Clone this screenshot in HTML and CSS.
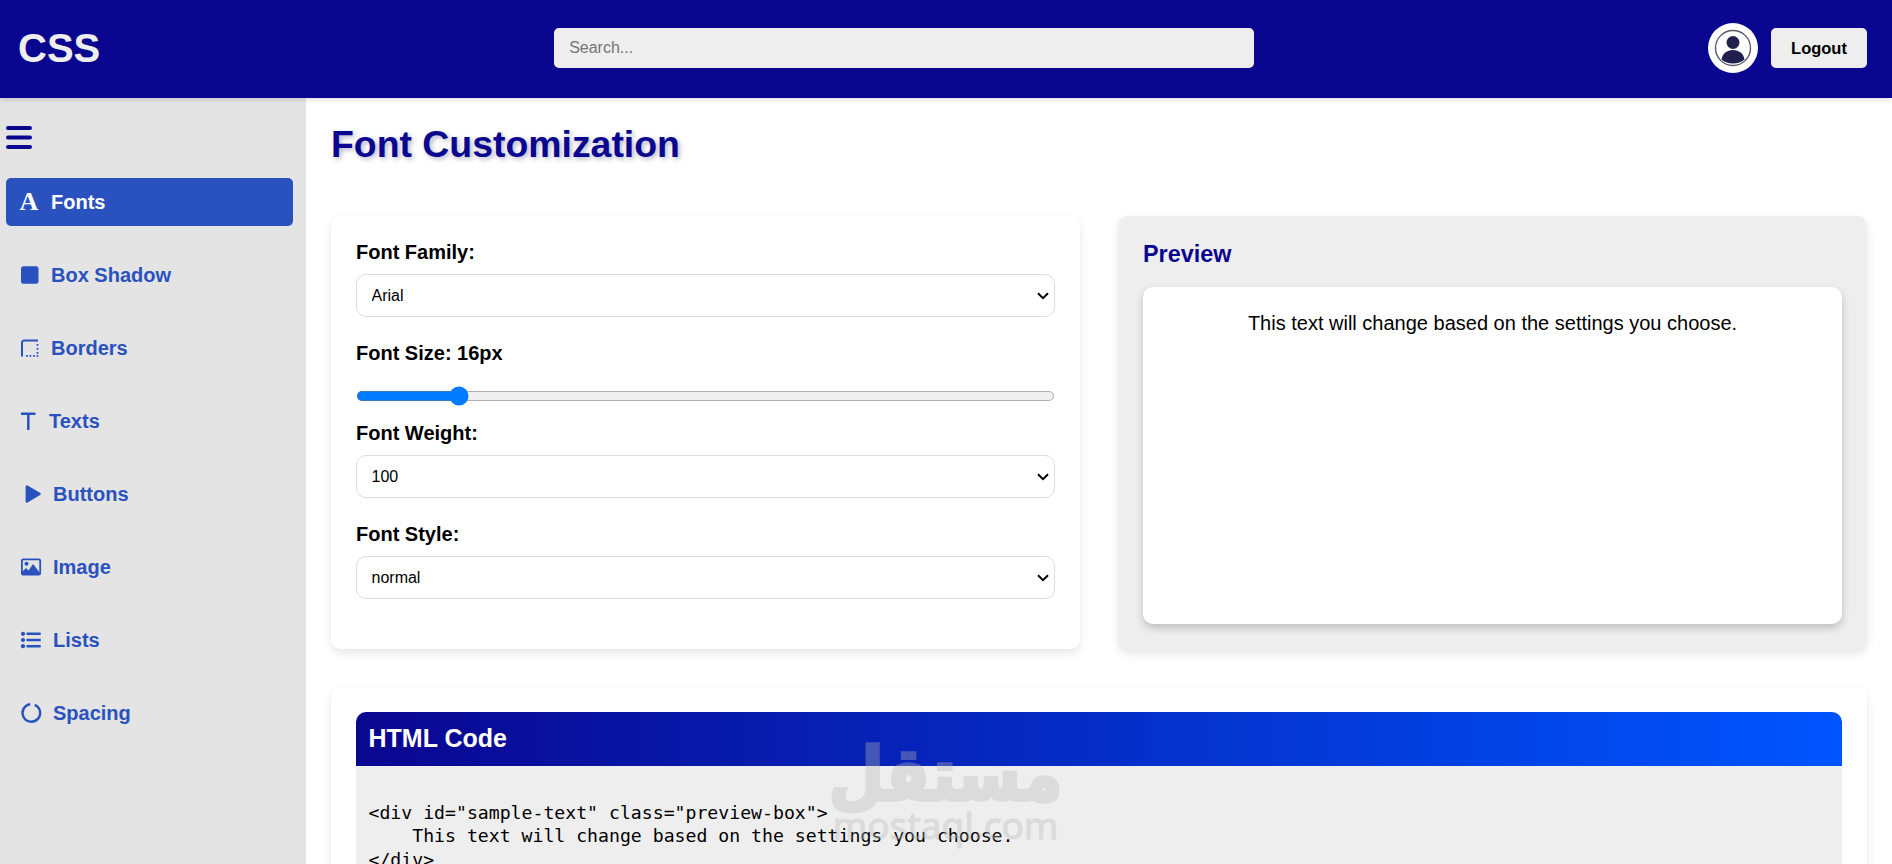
FILE: index.html
```html
<!DOCTYPE html>
<html lang="en">
<head>
<meta charset="utf-8">
<title>CSS</title>
<link rel="stylesheet" href="styles.css">
</head>
<body>
<header class="topbar">
  <div class="logo">CSS</div>
  <input class="search" type="text" placeholder="Search...">
  <div class="account">
    <div class="avatar">
      <svg width="38" height="38" viewBox="0 0 38 38"><circle cx="19" cy="19" r="17.500" fill="#fff" stroke="#5a5a6a" stroke-width="1.400"/><circle cx="19" cy="13.500" r="6.500" fill="#20204f"/><path d="M7.500 30.500c1-6 5.500-9.500 11.500-9.500s10.500 3.500 11.500 9.500c-3 2.700-7 4-11.500 4s-8.500-1.300-11.500-4z" fill="#20204f"/></svg>
    </div>
    <button class="logout">Logout</button>
  </div>
</header>
<div class="layout">
  <aside class="sidebar">
    <svg class="burger" width="26" height="23" viewBox="0 0 26 23"><path d="M2 2h22M2 11.500h22M2 21h22" stroke="#0a068f" stroke-width="4" stroke-linecap="round"/></svg>
    <nav class="nav">
      <a class="nav-item active"><span class="glyph-a">A</span>Fonts</a>
      <a class="nav-item"><svg width="18" height="18" viewBox="0 0 18 18"><rect x="1" y="0.300" width="17.500" height="17.500" rx="2.500" fill="#2a52be"/></svg>Box Shadow</a>
      <a class="nav-item"><svg width="18" height="18" viewBox="0 0 18 18"><path d="M2 17.500V3.500A2 2 0 0 1 4 1.500h14" fill="none" stroke="#2a52be" stroke-width="2"/><path d="M17.500 5v1.800M17.500 9v1.800M17.500 13v1.800M6 16.800h1.800M9.500 16.800h1.800M13 16.800h1.800M16.500 16.800h1.800" stroke="#2a52be" stroke-width="1.800"/></svg>Borders</a>
      <a class="nav-item"><svg width="16" height="18" viewBox="0 0 16 18"><path d="M1 1.800h14.500M8.300 1.800v16.200" fill="none" stroke="#2a52be" stroke-width="2.500"/></svg>Texts</a>
      <a class="nav-item"><svg width="20" height="18" viewBox="0 0 20 18"><path d="M7.600.600l12.400 7.200a1.300 1.300 0 0 1 0 2.300l-12.400 7.400a1.300 1.300 0 0 1-2-1.100V1.700a1.300 1.300 0 0 1 2-1.100z" fill="#2a52be"/></svg>Buttons</a>
      <a class="nav-item"><svg width="20" height="18" viewBox="0 0 20 18"><rect x="1.900" y="1.300" width="18.300" height="15.400" rx="1.500" fill="none" stroke="#2a52be" stroke-width="1.800"/><circle cx="6.500" cy="5.800" r="2" fill="#2a52be"/><path d="M2 17v-3l4-4 2.500 2.500 4.500-6.500 7 9v2z" fill="#2a52be"/></svg>Image</a>
      <a class="nav-item"><svg width="20" height="18" viewBox="0 0 20 18"><path d="M6.500 2.800h14.200M6.500 9h14.200M6.500 15.200h14.200" stroke="#2a52be" stroke-width="2.500"/><circle cx="3" cy="2.800" r="2.100" fill="#2a52be"/><circle cx="3" cy="9" r="2.100" fill="#2a52be"/><circle cx="3" cy="15.200" r="2.100" fill="#2a52be"/></svg>Lists</a>
      <a class="nav-item"><svg width="20" height="20" viewBox="0 0 20 20"><path d="M13.700 1.800A8.800 8.800 0 1 1 9.200 1.200" fill="none" stroke="#2a52be" stroke-width="2.400" transform="translate(1 0)"/></svg>Spacing</a>
    </nav>
  </aside>
  <main class="main">
    <h1 class="title">Font Customization</h1>
    <div class="panels">
      <form class="card controls">
        <label class="field-label">Font Family:</label>
        <select class="field"><option>Arial</option></select>
        <label class="field-label">Font Size: 16px</label>
        <input class="slider" type="range" min="10" max="54" value="16">
        <label class="field-label">Font Weight:</label>
        <select class="field"><option>100</option></select>
        <label class="field-label">Font Style:</label>
        <select class="field"><option>normal</option></select>
      </form>
      <section class="card preview">
        <h3 class="preview-title">Preview</h3>
        <div class="preview-box">This text will change based on the settings you choose.</div>
      </section>
    </div>
    <section class="card code-card">
      <h3 class="code-head">HTML Code</h3>
      <pre class="code-body">&lt;div id="sample-text" class="preview-box"&gt;
    This text will change based on the settings you choose.
&lt;/div&gt;</pre>
    </section>
  </main>
</div>
<div class="watermark"><div class="wm-ar" dir="rtl" lang="ar">مستقل</div><div class="wm-en">mostaql.com</div></div>
</body>
</html>
```
FILE: styles.css
```css
* { box-sizing: border-box; }
html, body { margin: 0; height: 100%; overflow: hidden; }
body { font-family: "Liberation Sans", Arial, sans-serif; font-size: 20px; color: #000; background: #fff; position: relative; }

.topbar { height: 98px; background: #0a068f; display: flex; align-items: center; justify-content: space-between; padding: 0 25px 2px 18px; box-shadow: 0 2px 5px rgba(0,0,0,.12); position: relative; z-index: 2; }
.logo { font-size: 40px; font-weight: 700; color: #eee; }
.search { width: 700px; height: 40px; border: 0; border-radius: 5px; background: #eee; padding: 0 15px; font: 16px "Liberation Sans", Arial, sans-serif; }
.search::placeholder { color: #757575; }
.account { display: flex; align-items: center; gap: 13px; }
.avatar { width: 50px; height: 50px; border-radius: 50%; background: #fff; display: flex; align-items: center; justify-content: center; }
.logout { width: 96px; height: 40px; border: 0; border-radius: 5px; background: #eee; color: #000; font: 700 16.500px "Liberation Sans", Arial, sans-serif; padding: 0; }

.layout { display: flex; height: calc(100vh - 98px); }
.sidebar { width: 306px; flex: none; background: #e4e4e4; padding: 28px 13px 0 6px; }
.burger { display: block; margin-bottom: 29px; }
.nav { display: flex; flex-direction: column; gap: 25px; }
.nav-item { height: 48px; display: flex; align-items: center; gap: 13px; padding-left: 14px; border-radius: 5px; font-weight: 700; color: #2a52be; }
.nav-item svg { overflow: visible; flex: none; }
.nav-item.active { background: #2a52be; color: #fff; }
.glyph-a { width: 18px; display: flex; justify-content: center; font: 700 26px "Liberation Serif", serif; }

.main { flex: 1; min-width: 0; padding: 25px; }
.title { margin: 0 0 50px; font-size: 37.400px; line-height: 43px; font-weight: 700; color: #0a068f; text-shadow: 2px 2px 5px rgba(0,0,80,.3); }
.panels { display: grid; grid-template-columns: 749px 749px; gap: 38px; }
.card { border-radius: 10px; box-shadow: 0 4px 10px rgba(0,0,0,.1); background: #fff; padding: 25px; }
.controls { display: flex; flex-direction: column; height: 433px; }
.field-label { font-weight: 700; line-height: 23px; margin-bottom: 10px; }
.field { appearance: none; height: 43px; border: 1.500px solid #ddd; border-radius: 10px; background: #fff url("data:image/svg+xml,%3Csvg xmlns='http://www.w3.org/2000/svg' width='12' height='8' viewBox='0 0 12 8'%3E%3Cpath d='M1 1.200l5 5 5-5' fill='none' stroke='%23000' stroke-width='2'/%3E%3C/svg%3E") no-repeat right 5.500px center; padding: 0 14.500px; font: 16px "Liberation Sans", Arial, sans-serif; color: #000; margin-bottom: 25px; }
.slider { zoom: 1.25; width: 559.200px; margin: 9px 0 12.600px; height: 16px; accent-color: #007bff; }
.preview { background: #eee; height: 434px; display: flex; flex-direction: column; }
.preview-title { margin: 0 0 20px; font-size: 23.400px; line-height: 26px; color: #0a068f; }
.preview-box { height: 337px; flex: none; background: #fff; border-radius: 10px; box-shadow: 0 4px 8px rgba(0,0,0,.2); padding: 25px; text-align: center; line-height: 23px; }

.code-card { margin-top: 37px; padding-bottom: 25px; }
.code-head { margin: 0; height: 54px; line-height: 52px; padding: 0 12.500px; font-size: 25px; color: #fff; border-radius: 10px 10px 0 0; background: linear-gradient(90deg, #0a068f, #0055ff); }
.code-body { margin: 0; background: #eee; padding: 35px 12.500px 20px; font: 18.160px/23.400px "DejaVu Sans Mono", monospace; color: #000; }

.watermark { position: absolute; left: 833px; top: 737px; width: 225px; display: flex; flex-direction: column; align-items: center; color: #b8b8b8; opacity: .35; pointer-events: none; z-index: 3; }
.wm-ar { font: 700 64px/76px "DejaVu Sans", sans-serif; -webkit-text-stroke: 3px #b8b8b8; white-space: nowrap; transform: scaleY(1.15); margin-bottom: -5px; }
.wm-en { font: 400 37px/34px "Noto Sans", sans-serif; -webkit-text-stroke: 1px #b8b8b8; white-space: nowrap; }
```
